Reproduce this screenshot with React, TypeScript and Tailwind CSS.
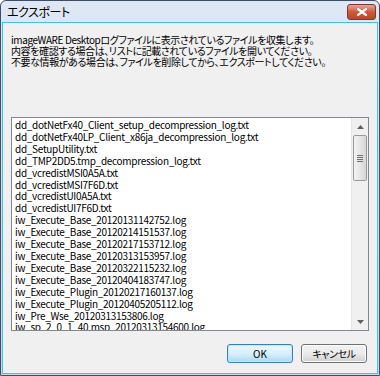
import React from "react";

const files = [
  "dd_dotNetFx40_Client_setup_decompression_log.txt",
  "dd_dotNetFx40LP_Client_x86ja_decompression_log.txt",
  "dd_SetupUtility.txt",
  "dd_TMP2DD5.tmp_decompression_log.txt",
  "dd_vcredistMSI0A5A.txt",
  "dd_vcredistMSI7F6D.txt",
  "dd_vcredistUI0A5A.txt",
  "dd_vcredistUI7F6D.txt",
  "iw_Execute_Base_20120131142752.log",
  "iw_Execute_Base_20120214151537.log",
  "iw_Execute_Base_20120217153712.log",
  "iw_Execute_Base_20120313153957.log",
  "iw_Execute_Base_20120322115232.log",
  "iw_Execute_Base_20120404183747.log",
  "iw_Execute_Plugin_20120217160137.log",
  "iw_Execute_Plugin_20120405205112.log",
  "iw_Pre_Wse_20120313153806.log",
  "iw_sp_2_0_1_40.msp_20120313154600.log",
];

const uiFont = "[font-family:'Noto_Sans_CJK_JP',sans-serif] [font-feature-settings:'palt']";

function Scrollbar() {
  return (
    <div className="flex w-[17px] shrink-0 flex-col bg-[#f0f0f0] border-l border-[#e6e6e6]">
      {/* up arrow */}
      <div className="flex h-[17px] items-center justify-center">
        <svg width="7" height="4" viewBox="0 0 7 4">
          <path d="M0 4 L3.5 0 L7 4 Z" fill="#606060" />
        </svg>
      </div>
      {/* thumb */}
      <div className="mx-[1px] flex h-[46px] items-center justify-center rounded-[2px] border border-[#9a9a9a] bg-gradient-to-r from-[#f3f3f3] via-[#e6e6e6] to-[#d6d6d6]">
        <div className="flex flex-col gap-[1px]">
          <div className="h-[1px] w-[6px] bg-[#6f6f6f]" />
          <div className="h-[1px] w-[6px] bg-[#6f6f6f]" />
          <div className="h-[1px] w-[6px] bg-[#6f6f6f]" />
          <div className="h-[1px] w-[6px] bg-[#6f6f6f]" />
        </div>
      </div>
      <div className="flex-1" />
      {/* down arrow */}
      <div className="flex h-[17px] items-center justify-center">
        <svg width="7" height="4" viewBox="0 0 7 4">
          <path d="M0 0 L3.5 4 L7 0 Z" fill="#606060" />
        </svg>
      </div>
    </div>
  );
}

export default function App() {
  return (
    <div className={`flex h-[376px] w-[380px] flex-col overflow-hidden rounded-t-[6px] border border-[#3d4f66] bg-gradient-to-b from-[#dde8f4] to-[#c8daee] ${uiFont}`}>
      {/* title bar */}
      <div className="flex h-[21px] items-center justify-between pl-[6px] pr-[3px]">
        <span className="text-[12px] leading-none tracking-[-0.4px] text-black">エクスポート</span>
        <div className="mt-[1px] flex h-[16px] w-[29px] items-center justify-center rounded-[3px] border border-[#7a3a2e] bg-gradient-to-b from-[#e8a493] via-[#d0573c] to-[#c0452b]">
          <svg width="10" height="8" viewBox="0 0 10 8">
            <path d="M1 1 L9 7 M9 1 L1 7" stroke="#ffffff" strokeWidth="2.2" strokeLinecap="square" />
          </svg>
        </div>
      </div>

      {/* client */}
      <div className="mx-[1px] mb-[1px] flex flex-1 flex-col border border-[#3fc3e6] bg-[#f0f0f0] px-[8px] pt-[11px]">
        <div className="whitespace-nowrap text-[10px] leading-[11px] tracking-[-0.4px] text-black">
          <p>imageWARE Desktopログファイルに表示されているファイルを収集します。</p>
          <p>内容を確認する場合は、リストに記載されているファイルを開いてください。</p>
          <p>不要な情報がある場合は、ファイルを削除してから、エクスポートしてください。</p>
        </div>

        <div className="mt-[50px] flex h-[214px] border border-[#828790] bg-white">
          <ul className="flex-1 overflow-hidden px-[3px] pt-[1px] text-[10px] leading-[11.9px] tracking-[-0.3px] text-black">
            {files.map((f) => (
              <li key={f} className="whitespace-nowrap">
                {f}
              </li>
            ))}
          </ul>
          <Scrollbar />
        </div>

        <div className="mt-[13px] flex justify-end gap-[8px] pr-[2px]">
          <button className="h-[19px] w-[66px] rounded-[3px] border border-[#3c7fb1] bg-gradient-to-b from-[#eaf6fd] via-[#d9f0fc] to-[#a7d9f5] text-[10px] leading-none text-black shadow-[inset_0_0_0_1px_#c3e6f8]">
            OK
          </button>
          <button className="h-[19px] w-[66px] rounded-[3px] border border-[#707070] bg-gradient-to-b from-[#f2f2f2] via-[#ebebeb] to-[#cfcfcf] text-[10px] leading-none tracking-[-0.4px] text-black shadow-[inset_0_0_0_1px_#fcfcfc]">
            キャンセル
          </button>
        </div>
      </div>
    </div>
  );
}
